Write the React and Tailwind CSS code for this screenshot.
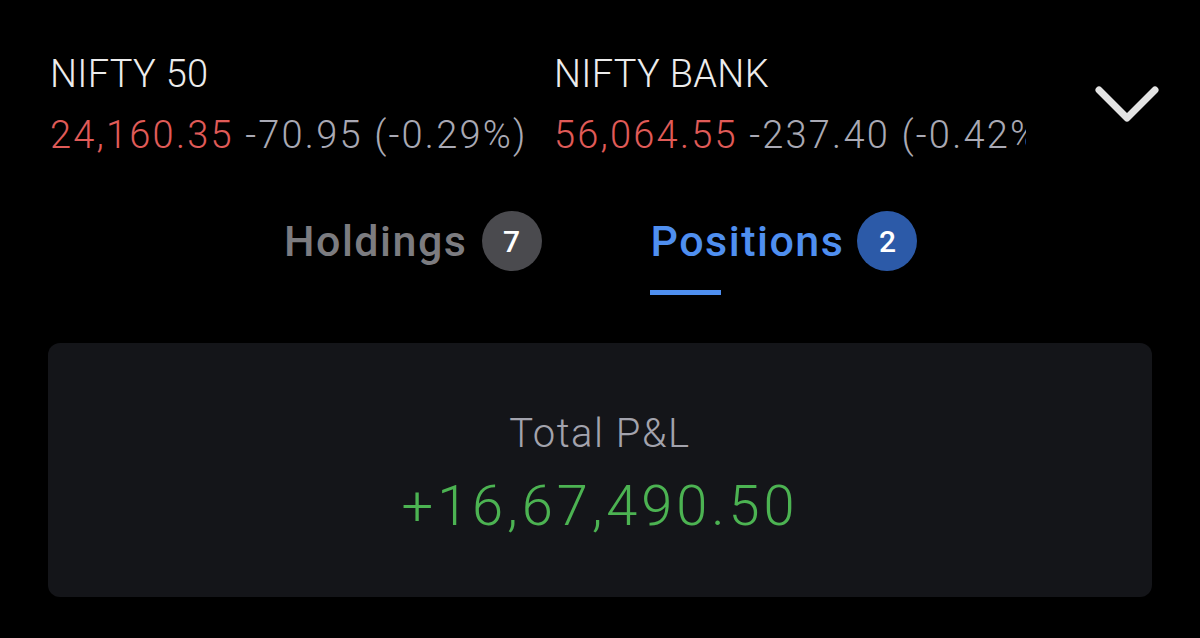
import React from "react";

export default function App() {
  return (
    <div className="w-[1200px] h-[638px] bg-black overflow-hidden" style={{ fontFamily: "Roboto, 'Liberation Sans', sans-serif" }}>
      <div className="flex items-start pt-[52px] pl-[50px] pr-[40px]">
        <div className="w-[504px] shrink-0">
          <div className="text-[38px] leading-[44px] text-[#ececec] font-light tracking-[0.3px]">NIFTY 50</div>
          <div className="text-[38px] leading-[44px] mt-[17px] whitespace-nowrap font-light tracking-[2.2px]">
            <span className="text-[#e05b58]">24,160.35</span>
            <span className="text-[#a9a9b4]"> -70.95 (-0.29%)</span>
          </div>
        </div>
        <div className="w-[472px] shrink-0 overflow-hidden">
          <div className="text-[38px] leading-[44px] text-[#ececec] font-light tracking-[0.3px]">NIFTY BANK</div>
          <div className="text-[38px] leading-[44px] mt-[17px] whitespace-nowrap font-light tracking-[2.2px]">
            <span className="text-[#e05b58]">56,064.55</span>
            <span className="text-[#a9a9b4]"> -237.40 (-0.42%)</span>
          </div>
        </div>
        <div className="flex-1 flex justify-end pt-[33px]">
          <svg width="66" height="40" viewBox="0 0 66 40" fill="none">
            <path d="M5 5 L33 33 L61 5" stroke="#e4e4e4" strokeWidth="7" strokeLinecap="round" strokeLinejoin="round" />
          </svg>
        </div>
      </div>

      <div className="flex mt-[54px] pl-[284px]">
        <div className="flex items-center gap-[14px]">
          <span className="text-[43px] font-medium tracking-[1.5px] text-[#7c7c80] leading-[60px]">Holdings</span>
          <span className="w-[60px] h-[60px] rounded-full bg-[#4a4a4e] text-white text-[30px] font-medium flex items-center justify-center">7</span>
        </div>
        <div className="flex items-center gap-[13px] ml-[109px]">
          <span className="text-[43px] font-medium tracking-[1.5px] text-[#4f8ff0] leading-[60px]">Positions</span>
          <span className="w-[60px] h-[60px] rounded-full bg-[#2c5aa8] text-white text-[30px] font-medium flex items-center justify-center">2</span>
        </div>
      </div>
      <div className="flex ml-[650px] mt-[19px]">
        <div className="w-[71px] h-[5px] bg-[#4f8ff0]" />
      </div>

      <div className="mx-[48px] mt-[48px] h-[254px] rounded-[12px] bg-[#141519] flex flex-col items-center justify-center">
        <div className="text-[40px] text-[#a3a3ad] leading-[48px] mt-[6px] font-light tracking-[1.5px]">Total P&amp;L</div>
        <div className="text-[56px] text-[#4cb352] leading-[60px] mt-[18px] font-light tracking-[3.9px]">+16,67,490.50</div>
      </div>
    </div>
  );
}
